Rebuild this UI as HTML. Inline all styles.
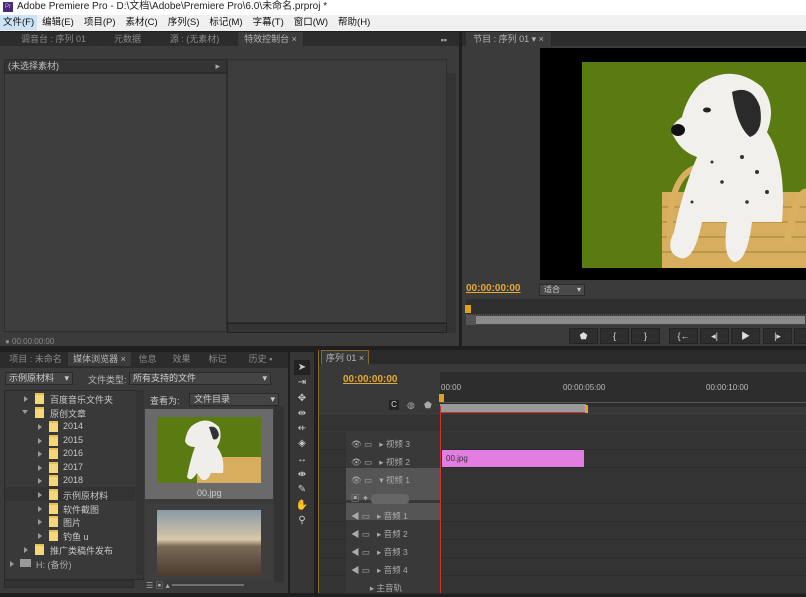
<!DOCTYPE html>
<html><head><meta charset="utf-8"><style>
*{margin:0;padding:0;box-sizing:border-box}
body{width:806px;height:593px;overflow:hidden;background:#1f1f1f;font-family:"Liberation Sans","Noto Sans CJK SC",sans-serif;font-size:9px;color:#b8b8b8;position:relative}
.a{position:absolute;white-space:nowrap}
.pan{background:#3b3b3b}
.tab{position:absolute;top:0;height:14px;line-height:14px;padding:0 3px;color:#8a8a8a;font-size:9px;border-right:1px solid #2a2a2a;white-space:nowrap;overflow:hidden;text-align:center}
.tabs{position:absolute;left:0;right:0;top:0;height:14px;background:#2c2c2c}
.t{color:#b5b5b5}
.trk{position:absolute;left:0;right:0;height:18px;border-bottom:1px solid #2c2c2c}
.fold{position:absolute;width:9px;height:11px;background:#f5d77a;border-top:2px solid #e8c050}
.arr{position:absolute;width:0;height:0;border-left:4px solid #9a9a9a;border-top:3px solid transparent;border-bottom:3px solid transparent}
.btn{position:absolute;top:328px;width:29px;height:16px;background:#2e2e2e;border:1px solid #242424;color:#ddd;font-size:9px;text-align:center;line-height:15px}
</style></head><body>
<div class="a" style="left:0;top:0;width:806px;height:15px;background:#fff;color:#222;font-size:10px;line-height:14px;padding-left:17px">Adobe Premiere Pro - D:\文档\Adobe\Premiere Pro\6.0\未命名.prproj *</div>
<div class="a" style="left:3px;top:2px;width:10px;height:10px;background:#4a2a7a;color:#c9a8ff;font-size:6px;line-height:10px;text-align:center">Pr</div>
<div class="a" style="left:0;top:15px;width:806px;height:16px;background:#f0f0f0;color:#111;font-size:9.5px;line-height:15px">
<span style="background:#cce3f7;padding:0 3px;display:inline-block">文件(F)</span><span style="padding:0 5px">编辑(E)</span><span style="padding:0 5px">项目(P)</span><span style="padding:0 5px">素材(C)</span><span style="padding:0 5px">序列(S)</span><span style="padding:0 5px">标记(M)</span><span style="padding:0 5px">字幕(T)</span><span style="padding:0 5px">窗口(W)</span><span style="padding:0 5px">帮助(H)</span></div>

<div class="a pan" style="left:0;top:32px;width:459px;height:314px">
 <div class="tabs"><div class="tab" style="left:4px;width:100px">调音台 : 序列 01</div><div class="tab" style="left:104px;width:48px">元数据</div><div class="tab" style="left:152px;width:86px">源 : (无素材)</div><div class="tab t" style="left:238px;width:66px;background:#3b3b3b">特效控制台 ×</div><div class="a" style="right:12px;top:3px;color:#aaa">▪▪</div></div>
 <div class="a" style="left:4px;top:27px;width:223px;height:14px;background:#343434;border:1px solid #2a2a2a;color:#c0c0c0;line-height:12px;padding-left:3px">(未选择素材)<span style="position:absolute;right:6px;color:#aaa">▸</span></div>
 <div class="a" style="left:4px;top:41px;width:223px;height:259px;background:#3e3e3e;border:1px solid #2e2e2e"></div>
 <div class="a" style="left:227px;top:27px;width:220px;height:264px;background:#3c3c3c;border:1px solid #2e2e2e"></div>
 <div class="a" style="left:227px;top:291px;width:220px;height:10px;background:#343434;border:1px solid #222"></div>
 <div class="a" style="left:447px;top:41px;width:9px;height:260px;background:#333"></div>
 <div class="a" style="left:5px;top:305px;color:#888;font-size:8px">● 00:00:00:00</div>
</div>

<div class="a pan" style="left:462px;top:32px;width:344px;height:314px">
 <div class="tabs"><div class="tab t" style="left:4px;width:86px;background:#3b3b3b">节目 : 序列 01 ▾ ×</div></div>
 <div class="a" style="left:78px;top:16px;width:266px;height:232px;background:#000"></div>
 <div class="a" style="left:120px;top:30px;width:224px;height:206px;background:#5a7a12;overflow:hidden">
  <svg width="224" height="206" viewBox="0 0 224 206">
   <rect x="80" y="130" width="144" height="76" fill="#d6ae5e"/>
   <g stroke="#b08a3c" stroke-width="1.3"><line x1="80" y1="145" x2="224" y2="145"/><line x1="80" y1="160" x2="224" y2="160"/><line x1="80" y1="175" x2="224" y2="175"/><line x1="80" y1="190" x2="224" y2="190"/></g>
   <path d="M88 180 Q85 115 115 105" stroke="#d8b060" stroke-width="6" fill="none"/>
   <path d="M205 180 Q215 130 224 130" stroke="#d8b060" stroke-width="7" fill="none"/>
   <path d="M118 22 Q150 0 180 25 Q195 45 185 70 Q205 100 200 160 L170 160 Q165 200 152 200 Q140 195 145 160 L120 160 Q112 200 98 196 Q82 190 92 170 Q100 130 115 95 Q100 90 92 75 Q85 65 100 55 Q105 35 118 22Z" fill="#f2f0ec"/>
   <path d="M150 30 Q170 22 178 45 Q182 70 168 75 Q155 65 150 30Z" fill="#2a2a2a"/>
   <ellipse cx="96" cy="68" rx="7" ry="6" fill="#111"/>
   <ellipse cx="125" cy="48" rx="4" ry="2.5" fill="#222"/>
   <g fill="#333"><circle cx="160" cy="95" r="2"/><circle cx="175" cy="110" r="2"/><circle cx="140" cy="120" r="1.8"/><circle cx="185" cy="130" r="2"/><circle cx="130" cy="100" r="1.5"/><circle cx="165" cy="140" r="1.8"/><circle cx="110" cy="140" r="1.5"/></g>
  </svg>
 </div>
 <div class="a" style="left:4px;top:251px;color:#e3a932;font-size:10px;font-weight:bold;text-decoration:underline">00:00:00:00</div>
 <div class="a" style="left:77px;top:252px;width:46px;height:12px;background:#4a4a4a;border:1px solid #2a2a2a;color:#ccc;font-size:8px;line-height:10px;padding-left:4px">适合<span style="position:absolute;right:3px">▾</span></div>
 <div class="a" style="left:4px;top:267px;width:340px;height:16px;background:#2f2f2f;border-bottom:1px dotted #555"></div>
 <div class="a" style="left:3px;top:273px;width:6px;height:8px;background:#e0a020"></div>
 <div class="a" style="left:4px;top:283px;width:340px;height:10px;background:#8a8a8a;border:1px solid #444"></div>
 <div class="a" style="left:4px;top:283px;width:10px;height:10px;background:#555"></div>
</div>
<div class="btn" style="left:569px">⬟</div><div class="btn" style="left:600px">{</div><div class="btn" style="left:631px">}</div>
<div class="btn" style="left:669px">{←</div><div class="btn" style="left:700px">◂|</div><div class="btn" style="left:731px">▶</div><div class="btn" style="left:763px">|▸</div><div class="btn" style="left:794px">-</div>

<div class="a pan" style="left:0;top:352px;width:288px;height:241px">
 <div class="tabs" style="height:16px"><div class="tab" style="left:4px;width:64px">项目 : 未命名</div><div class="tab t" style="left:68px;width:64px;background:#3b3b3b">媒体浏览器 ×</div><div class="tab" style="left:132px;width:32px">信息</div><div class="tab" style="left:164px;width:36px">效果</div><div class="tab" style="left:200px;width:36px">标记</div><div class="tab" style="left:236px;width:50px">历史 ▪</div></div>
 <div class="a" style="left:5px;top:20px;width:68px;height:13px;background:#444;border:1px solid #2a2a2a;color:#ccc;line-height:11px;padding-left:3px">示例原材料<span style="position:absolute;right:3px">▾</span></div>
 <div class="a" style="left:88px;top:21px;color:#bbb">文件类型:</div>
 <div class="a" style="left:129px;top:20px;width:142px;height:13px;background:#444;border:1px solid #2a2a2a;color:#ccc;line-height:11px;padding-left:3px">所有支持的文件<span style="position:absolute;right:3px">▾</span></div>
 <div class="a" style="left:4px;top:38px;width:140px;height:190px;background:#393939;border:1px solid #2a2a2a"></div>
 <div class="a" style="left:136px;top:38px;width:8px;height:185px;background:#333"></div>
 <div class="a" style="left:4px;top:228px;width:130px;height:8px;background:#333;border:1px solid #2a2a2a"></div>
 <div class="a" style="left:5px;top:135px;width:130px;height:14px;background:#333"></div>
 <div class="a" style="left:145px;top:38px;width:129px;height:190px;background:#3a3a3a"></div>
 <div class="a" style="left:150px;top:42px;color:#ccc">查看为:</div>
 <div class="a" style="left:189px;top:41px;width:90px;height:13px;background:#444;border:1px solid #2a2a2a;color:#ccc;line-height:11px;padding-left:4px">文件目录<span style="position:absolute;right:3px">▾</span></div>
 <div class="a" style="left:145px;top:57px;width:128px;height:90px;background:#6a6a6a"></div>
 <div class="a" style="left:157px;top:65px;width:104px;height:66px;background:#5a7a12;overflow:hidden">
  <svg width="104" height="66"><rect x="40" y="40" width="64" height="26" fill="#d6ae5e"/><path d="M36 8 Q50 -2 62 10 Q66 20 60 30 Q68 40 66 56 L54 56 Q50 66 44 62 L40 56 Q34 66 30 60 Q34 40 38 30 Q30 30 28 24 Q30 12 36 8Z" fill="#f0eeea"/><path d="M52 10 Q60 8 62 18 Q60 24 56 22Z" fill="#333"/></svg>
 </div>
 <div class="a" style="left:197px;top:136px;color:#ccc">00.jpg</div>
 <div class="a" style="left:145px;top:152px;width:128px;height:76px;background:#3e3e3e"></div>
 <div class="a" style="left:157px;top:158px;width:104px;height:66px;background:linear-gradient(#8a9aa8,#d8c8a8 45%,#7a6a58 55%,#4a3a30)"></div>
 <div class="a" style="left:274px;top:54px;width:10px;height:176px;background:#333"></div>
</div>
<div class="a" style="left:0;top:390px;width:140px;color:#c8c8c8;font-size:9px">
 <div class="arr" style="left:24px;top:6px"></div><div class="fold" style="left:35px;top:3px"></div><div class="a" style="left:50px;top:3px">百度音乐文件夹</div>
 <div class="a" style="left:22px;top:20px;border-top:4px solid #9a9a9a;border-left:3px solid transparent;border-right:3px solid transparent"></div><div class="fold" style="left:35px;top:17px"></div><div class="a" style="left:50px;top:17px">原创文章</div>
 <div class="arr" style="left:38px;top:34px"></div><div class="fold" style="left:49px;top:31px"></div><div class="a" style="left:63px;top:31px">2014</div>
 <div class="arr" style="left:38px;top:48px"></div><div class="fold" style="left:49px;top:45px"></div><div class="a" style="left:63px;top:45px">2015</div>
 <div class="arr" style="left:38px;top:61px"></div><div class="fold" style="left:49px;top:58px"></div><div class="a" style="left:63px;top:58px">2016</div>
 <div class="arr" style="left:38px;top:75px"></div><div class="fold" style="left:49px;top:72px"></div><div class="a" style="left:63px;top:72px">2017</div>
 <div class="arr" style="left:38px;top:88px"></div><div class="fold" style="left:49px;top:85px"></div><div class="a" style="left:63px;top:85px">2018</div>
 <div class="arr" style="left:38px;top:102px"></div><div class="fold" style="left:49px;top:99px"></div><div class="a" style="left:63px;top:99px">示例原材料</div>
 <div class="arr" style="left:38px;top:116px"></div><div class="fold" style="left:49px;top:113px"></div><div class="a" style="left:63px;top:113px">软件截图</div>
 <div class="arr" style="left:38px;top:129px"></div><div class="fold" style="left:49px;top:126px"></div><div class="a" style="left:63px;top:126px">图片</div>
 <div class="arr" style="left:38px;top:143px"></div><div class="fold" style="left:49px;top:140px"></div><div class="a" style="left:63px;top:140px">钓鱼 u</div>
 <div class="arr" style="left:24px;top:157px"></div><div class="fold" style="left:35px;top:154px"></div><div class="a" style="left:50px;top:154px">推广类稿件发布</div>
 <div class="arr" style="left:10px;top:171px"></div><div class="a" style="left:20px;top:169px;width:11px;height:8px;background:#999"></div><div class="a" style="left:36px;top:168px;color:#aaa">H: (备份)</div>
</div>
<div class="a" style="left:146px;top:580px;width:140px;height:13px;color:#aaa;font-size:8px">☰ ▣ ▴ ━━━━━━━━━</div>

<div class="a pan" style="left:290px;top:352px;width:24px;height:241px;background:#363636;color:#ccc;font-size:10px;text-align:center;line-height:15.3px">
 <div style="margin-top:8px;background:#222;width:16px;margin-left:4px">➤</div><div>⇥</div><div>✥</div><div>⇹</div><div>⇷</div><div>◈</div><div>↔</div><div>⇼</div><div>✎</div><div>✋</div><div>⚲</div>
</div>

<div class="a" style="left:318px;top:350px;width:488px;height:243px;background:#393939;border-left:1px solid #8a6a2a">
 <div class="tabs" style="height:14px;background:#2a2a2a"><div class="tab t" style="left:2px;width:48px;background:#393939;border:1px solid #8a6a2a;border-bottom:none">序列 01 ×</div></div>
 <div class="a" style="left:24px;top:24px;color:#e3a932;font-size:10px;font-weight:bold;text-decoration:underline">00:00:00:00</div>
 <div class="a" style="left:121px;top:22px;width:367px;height:35px;background:#2d2d2d"></div>
 <div class="a" style="left:122px;top:33px;color:#bbb;font-size:8px">00:00</div>
 <div class="a" style="left:244px;top:33px;color:#bbb;font-size:8px">00:00:05:00</div>
 <div class="a" style="left:387px;top:33px;color:#bbb;font-size:8px">00:00:10:00</div>
 <div class="a" style="left:121px;top:52px;width:367px;height:5px;border-top:1px solid #555"></div>
 <div class="a" style="left:121px;top:54px;width:146px;height:9px;background:#9a9a9a;border-bottom:1px solid #c33"></div>
 <div class="a" style="left:266px;top:55px;width:3px;height:8px;background:#f0a030"></div>
 <div class="a" style="left:120px;top:44px;width:5px;height:8px;background:#e0a020"></div>
 <div class="a" style="left:70px;top:50px;width:10px;height:10px;background:#222;color:#ddd;font-size:8px;line-height:10px;text-align:center">C</div>
 <div class="a" style="left:88px;top:50px;color:#aaa">◍</div><div class="a" style="left:105px;top:50px;color:#aaa">⬟</div>
 <div class="a" style="left:0;top:65px;width:488px;height:16px;background:#333"></div>
 <div class="a" style="left:0;top:82px;width:488px;height:161px;background:#2f2f2f"></div>
 <div class="trk" style="top:82px;background:#333"></div>
 <div class="trk" style="top:100px;background:#333"></div>
 <div class="trk" style="top:118px;height:36px;background:#333"></div>
 <div class="trk" style="top:154px;background:#333"></div>
 <div class="trk" style="top:172px;background:#333"></div>
 <div class="trk" style="top:190px;background:#333"></div>
 <div class="trk" style="top:208px;background:#333"></div>
 <div class="trk" style="top:226px;background:#333"></div>
 <div class="a" style="left:27px;top:82px;width:95px;height:161px;background:#393939"></div>
 <div class="a" style="left:27px;top:118px;width:95px;height:32px;background:#555"></div>
 <div class="a" style="left:27px;top:153px;width:95px;height:17px;background:#555"></div>
 <div class="a" style="left:32px;top:85px;color:#aaa;font-size:8.5px;line-height:18px;width:90px">
  <div>👁 ▭ &nbsp; ▸ 视频 3</div><div>👁 ▭ &nbsp; ▸ 视频 2</div><div>👁 ▭ &nbsp; ▾ 视频 1</div><div style="height:18px">▣ ✦ <span style="display:inline-block;width:38px;height:10px;background:#666;border-radius:4px;vertical-align:middle"></span></div>
  <div>◀ ▭ &nbsp; ▸ 音频 1</div><div>◀ ▭ &nbsp; ▸ 音频 2</div><div>◀ ▭ &nbsp; ▸ 音频 3</div><div>◀ ▭ &nbsp; ▸ 音频 4</div><div>&nbsp;&nbsp;&nbsp;&nbsp;&nbsp;&nbsp;&nbsp; ▸ 主音轨</div>
 </div>
 <div class="a" style="left:123px;top:100px;width:142px;height:17px;background:#e27ee2;color:#333;font-size:8px;line-height:17px;padding-left:4px">00.jpg</div>
 <div class="a" style="left:121px;top:56px;width:1px;height:187px;background:#c33"></div>
</div>
</body></html>
